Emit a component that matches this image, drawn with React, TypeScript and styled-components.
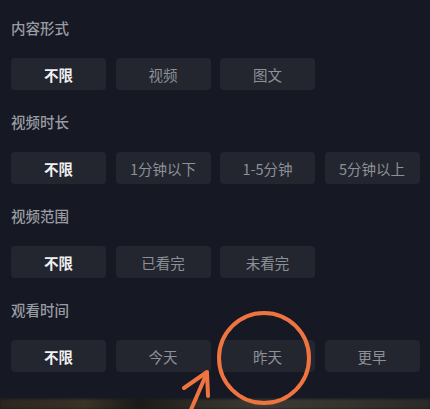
import styled, { createGlobalStyle } from "styled-components";

const GlobalStyle = createGlobalStyle`
  html, body {
    margin: 0;
    padding: 0;
    background: #161923;
  }
  body {
    font-family: "Noto Sans CJK SC", "Noto Sans", sans-serif;
  }
`;

interface Group {
  title: string;
  options: string[];
}

const groups: Group[] = [
  { title: "内容形式", options: ["不限", "视频", "图文"] },
  { title: "视频时长", options: ["不限", "1分钟以下", "1-5分钟", "5分钟以上"] },
  { title: "视频范围", options: ["不限", "已看完", "未看完"] },
  { title: "观看时间", options: ["不限", "今天", "昨天", "更早"] },
];

const App = () => {
  return (
    <Page>
      <GlobalStyle />
      <Panel>
        {groups.map((g) => (
          <Section key={g.title}>
            <Label>{g.title}</Label>
            <Options>
              {g.options.map((o, i) => (
                <Chip key={o} $active={i === 0}>
                  {o}
                </Chip>
              ))}
            </Options>
          </Section>
        ))}
      </Panel>
      <Backdrop />
      <Annotation width="430" height="409" viewBox="0 0 430 409">
        <circle cx="264" cy="358" r="45" fill="none" stroke="#ef7440" strokeWidth="4" />
        <path d="M190 412 L206 375" stroke="#ef7440" strokeWidth="4" strokeLinecap="round" fill="none" />
        <path d="M184 388 L207 372 L208 396" stroke="#ef7440" strokeWidth="4" strokeLinecap="round" strokeLinejoin="round" fill="none" />
      </Annotation>
    </Page>
  );
};

export default App;

const Page = styled.div`
  position: relative;
  width: 430px;
  height: 409px;
  overflow: hidden;
  background: #161923;
  display: flex;
  flex-direction: column;
`;

const Panel = styled.div`
  display: flex;
  flex-direction: column;
  gap: 22px;
  padding: 18px 10px 0 11px;
  flex: 1;
`;

const Section = styled.div`
  display: flex;
  flex-direction: column;
  gap: 20px;
`;

const Label = styled.div`
  font-size: 14.5px;
  line-height: 20px;
  font-weight: 500;
  color: #9a9ca3;
`;

const Options = styled.div`
  display: grid;
  grid-template-columns: repeat(4, 95px);
  column-gap: 9.5px;
`;

const Chip = styled.div<{ $active: boolean }>`
  height: 32px;
  border-radius: 4px;
  background: #23262f;
  display: flex;
  align-items: center;
  justify-content: center;
  font-size: 14.5px;
  font-weight: ${(p) => (p.$active ? 600 : 400)};
  color: ${(p) => (p.$active ? "#f0f0f2" : "#8d9097")};
`;

const Backdrop = styled.div`
  height: 10px;
  background: linear-gradient(
    90deg,
    #2b2620 0%,
    #3a3226 20%,
    #1c1a18 32%,
    #2d2b25 45%,
    #3b3a35 60%,
    #34332e 80%,
    #2a2a28 100%
  );
  filter: blur(1px);
`;

const Annotation = styled.svg`
  position: absolute;
  left: 0;
  top: 0;
  pointer-events: none;
`;
